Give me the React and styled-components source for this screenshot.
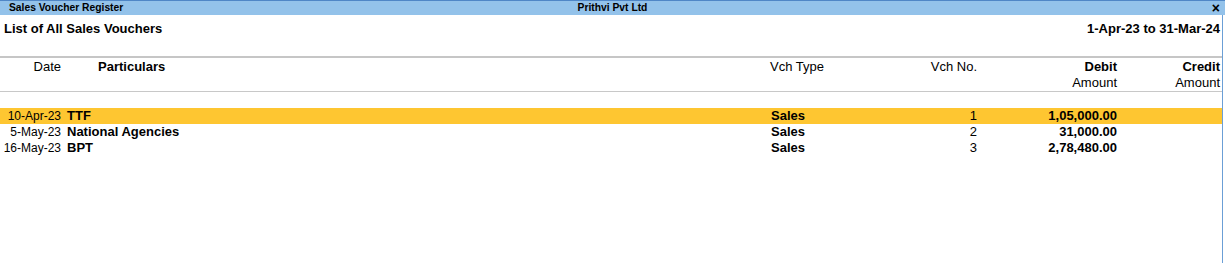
import React from "react";
import styled, { createGlobalStyle } from "styled-components";

const GlobalStyle = createGlobalStyle`
  body {
    margin: 0;
    background: #ffffff;
    font-family: "Liberation Sans", Arial, sans-serif;
    color: #000;
  }
`;

const vouchers = [
  { date: "10-Apr-23", party: "TTF", type: "Sales", no: "1", debit: "1,05,000.00", credit: "" },
  { date: "5-May-23", party: "National Agencies", type: "Sales", no: "2", debit: "31,000.00", credit: "" },
  { date: "16-May-23", party: "BPT", type: "Sales", no: "3", debit: "2,78,480.00", credit: "" },
];

export default function App() {
  return (
    <>
      <GlobalStyle />
      <Screen>
        <TitleBar>
          <TitleLeft>Sales Voucher Register</TitleLeft>
          <TitleCenter>Prithvi Pvt Ltd</TitleCenter>
          <Close>×</Close>
        </TitleBar>
        <Panel>
          <Heading>
            <h1>List of All Sales Vouchers</h1>
            <Period>1-Apr-23 to 31-Mar-24</Period>
          </Heading>
          <HeaderRow>
            <HeadCell align="right">Date</HeadCell>
            <HeadCell bold indent={37}>Particulars</HeadCell>
            <HeadCell>Vch Type</HeadCell>
            <HeadCell align="right">Vch No.</HeadCell>
            <HeadCell align="right">
              <b>Debit</b>
              <br />
              Amount
            </HeadCell>
            <HeadCell align="right">
              <b>Credit</b>
              <br />
              Amount
            </HeadCell>
          </HeaderRow>
          <Body>
            {vouchers.map((v, i) => (
              <Row key={v.no} selected={i === 0}>
                <Cell align="right" size={12}>{v.date}</Cell>
                <Cell bold indent={6}>{v.party}</Cell>
                <Cell bold indent={1}>{v.type}</Cell>
                <Cell align="right">{v.no}</Cell>
                <Cell bold align="right">{v.debit}</Cell>
                <Cell bold align="right">{v.credit}</Cell>
              </Row>
            ))}
          </Body>
        </Panel>
      </Screen>
    </>
  );
}

const columns = "61px 709px 120px 87px 140px 103px";

const Screen = styled.div`
  width: 1225px;
  height: 263px;
  display: flex;
  flex-direction: column;
  overflow: hidden;
`;

const TitleBar = styled.div`
  height: 14px;
  display: grid;
  grid-template-columns: 1fr auto 1fr;
  align-items: center;
  background: #93c2ea;
  border-top: 1px solid #4f86c6;
  font-size: 10.3px;
  font-weight: bold;
  line-height: 14px;
`;

const TitleLeft = styled.span`
  padding-left: 9px;
`;

const TitleCenter = styled.span`
  text-align: center;
`;

const Close = styled.span`
  justify-self: end;
  padding-right: 5px;
  font-size: 14px;
  line-height: 14px;
`;

const Panel = styled.div`
  flex: 1;
  width: 1222px;
  border-right: 1px solid #6b9fd6;
`;

const Heading = styled.div`
  height: 36px;
  padding: 6px 2px 0 4px;
  display: flex;
  justify-content: space-between;
  align-items: flex-start;
  border-bottom: 2px solid #c6c6c6;
  box-sizing: border-box;
  height: 43px;

  h1 {
    margin: 0;
    font-size: 13px;
    line-height: 16px;
    font-weight: bold;
  }
`;

const Period = styled.span`
  font-size: 13px;
  line-height: 16px;
  font-weight: bold;
`;

const HeaderRow = styled.div`
  display: grid;
  grid-template-columns: ${columns};
  height: 32px;
  padding-top: 1px;
  border-bottom: 1px solid #c8c8c8;
`;

const HeadCell = styled.div`
  font-size: 13px;
  line-height: 16px;
  font-weight: ${(p) => (p.bold ? "bold" : "normal")};
  text-align: ${(p) => p.align || "left"};
  padding-left: ${(p) => p.indent || 0}px;
`;

const Body = styled.div`
  padding-top: 16px;
`;

const Row = styled.div`
  display: grid;
  grid-template-columns: ${columns};
  height: 16px;
  background: ${(p) => (p.selected ? "#fec631" : "transparent")};
`;

const Cell = styled.div`
  font-size: ${(p) => p.size || 13}px;
  line-height: 16px;
  white-space: nowrap;
  font-weight: ${(p) => (p.bold ? "bold" : "normal")};
  text-align: ${(p) => p.align || "left"};
  padding-left: ${(p) => p.indent || 0}px;
`;
